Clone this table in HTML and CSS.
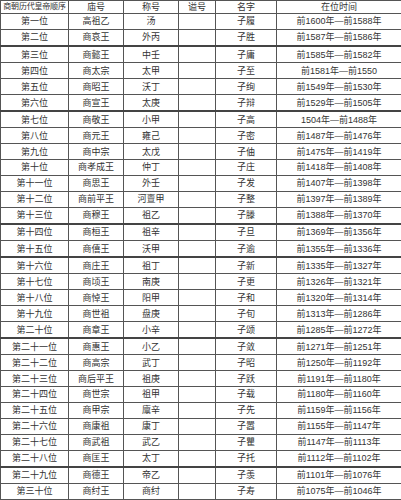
FILE: index.html
```html
<!DOCTYPE html>
<html lang="zh">
<head>
<meta charset="utf-8">
<link rel="stylesheet" href="styles.css">
</head>
<body>
<table class="kings">
<colgroup>
<col class="c1"><col class="c2"><col class="c3"><col class="c4"><col class="c5"><col class="c6">
</colgroup>
<thead>
<tr><th class="order">商朝历代皇帝顺序</th><th>庙号</th><th>称号</th><th>谥号</th><th>名字</th><th>在位时间</th></tr>
</thead>
<tbody>
<tr><td>第一位</td><td>高祖乙</td><td>汤</td><td></td><td>子履</td><td>前1600年—前1588年</td></tr>
<tr class="thick"><td>第二位</td><td>商哀王</td><td>外丙</td><td></td><td>子胜</td><td>前1587年—前1586年</td></tr>
<tr><td>第三位</td><td>商懿王</td><td>中壬</td><td></td><td>子庸</td><td>前1585年—前1582年</td></tr>
<tr><td>第四位</td><td>商太宗</td><td>太甲</td><td></td><td>子至</td><td>前1581年—前1550</td></tr>
<tr><td>第五位</td><td>商昭王</td><td>沃丁</td><td></td><td>子绚</td><td>前1549年—前1530年</td></tr>
<tr class="thick"><td>第六位</td><td>商宣王</td><td>太庚</td><td></td><td>子辩</td><td>前1529年—前1505年</td></tr>
<tr><td>第七位</td><td>商敬王</td><td>小甲</td><td></td><td>子高</td><td>1504年—前1488年</td></tr>
<tr><td>第八位</td><td>商元王</td><td>雍己</td><td></td><td>子密</td><td>前1487年—前1476年</td></tr>
<tr><td>第九位</td><td>商中宗</td><td>太戊</td><td></td><td>子伷</td><td>前1475年—前1419年</td></tr>
<tr><td>第十位</td><td>商孝成王</td><td>仲丁</td><td></td><td>子庄</td><td>前1418年—前1408年</td></tr>
<tr><td>第十一位</td><td>商思王</td><td>外壬</td><td></td><td>子发</td><td>前1407年—前1398年</td></tr>
<tr><td>第十二位</td><td>商前平王</td><td>河亶甲</td><td></td><td>子整</td><td>前1397年—前1389年</td></tr>
<tr class="thick"><td>第十三位</td><td>商穆王</td><td>祖乙</td><td></td><td>子滕</td><td>前1388年—前1370年</td></tr>
<tr><td>第十四位</td><td>商桓王</td><td>祖辛</td><td></td><td>子旦</td><td>前1369年—前1356年</td></tr>
<tr class="thick"><td>第十五位</td><td>商僖王</td><td>沃甲</td><td></td><td>子逾</td><td>前1355年—前1336年</td></tr>
<tr><td>第十六位</td><td>商庄王</td><td>祖丁</td><td></td><td>子新</td><td>前1335年—前1327年</td></tr>
<tr><td>第十七位</td><td>商顷王</td><td>南庚</td><td></td><td>子更</td><td>前1326年—前1321年</td></tr>
<tr><td>第十八位</td><td>商悼王</td><td>阳甲</td><td></td><td>子和</td><td>前1320年—前1314年</td></tr>
<tr><td>第十九位</td><td>商世祖</td><td>盘庚</td><td></td><td>子旬</td><td>前1313年—前1286年</td></tr>
<tr class="thick"><td>第二十位</td><td>商章王</td><td>小辛</td><td></td><td>子颂</td><td>前1285年—前1272年</td></tr>
<tr><td>第二十一位</td><td>商惠王</td><td>小乙</td><td></td><td>子敛</td><td>前1271年—前1251年</td></tr>
<tr><td>第二十二位</td><td>商高宗</td><td>武丁</td><td></td><td>子昭</td><td>前1250年—前1192年</td></tr>
<tr><td>第二十三位</td><td>商后平王</td><td>祖庚</td><td></td><td>子跃</td><td>前1191年—前1180年</td></tr>
<tr><td>第二十四位</td><td>商世宗</td><td>祖甲</td><td></td><td>子载</td><td>前1180年—前1160年</td></tr>
<tr><td>第二十五位</td><td>商甲宗</td><td>廪辛</td><td></td><td>子先</td><td>前1159年—前1156年</td></tr>
<tr><td>第二十六位</td><td>商康祖</td><td>康丁</td><td></td><td>子嚣</td><td>前1155年—前1147年</td></tr>
<tr><td>第二十七位</td><td>商武祖</td><td>武乙</td><td></td><td>子瞿</td><td>前1147年—前1113年</td></tr>
<tr class="thick"><td>第二十八位</td><td>商匡王</td><td>太丁</td><td></td><td>子托</td><td>前1112年—前1102年</td></tr>
<tr><td>第二十九位</td><td>商德王</td><td>帝乙</td><td></td><td>子羡</td><td>前1101年—前1076年</td></tr>
<tr><td>第三十位</td><td>商纣王</td><td>商纣</td><td></td><td>子寿</td><td>前1075年—前1046年</td></tr>
</tbody>
</table>
</body>
</html>
```
FILE: styles.css
```css
html, body {
  margin: 0;
  padding: 0;
  background: #fff;
}
.kings {
  width: 401px;
  height: 500px;
  border-collapse: collapse;
  table-layout: fixed;
  font-family: "Liberation Sans", "Noto Sans CJK SC", sans-serif;
  font-size: 9px;
  color: #333;
}
.kings .c1 { width: 68px; }
.kings .c2 { width: 55px; }
.kings .c3 { width: 55px; }
.kings .c4 { width: 37px; }
.kings .c5 { width: 61px; }
.kings .c6 { width: 125px; }
.kings th,
.kings td {
  border: 1px solid #555;
  padding: 0;
  text-align: center;
  vertical-align: middle;
  font-weight: normal;
  white-space: nowrap;
  overflow: hidden;
  line-height: 12px;
}
.kings th.order {
  font-size: 8px;
  letter-spacing: -0.2px;
}
.kings tr.thick td {
  border-bottom: 2px solid #444;
}
```
